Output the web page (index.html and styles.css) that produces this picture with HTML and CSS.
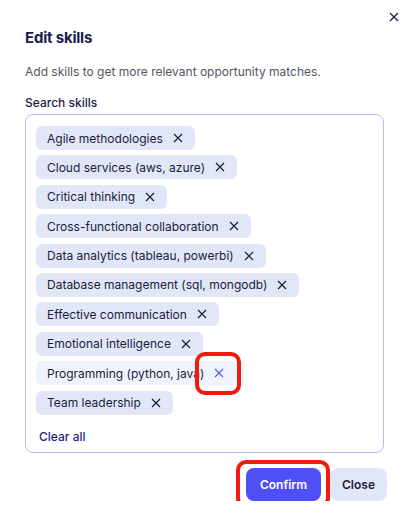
FILE: index.html
```html
<!DOCTYPE html>
<html lang="en">
<head>
<meta charset="utf-8">
<link rel="stylesheet" href="styles.css">
</head>
<body>
<div class="dialog">
  <div class="topbar">
    <button class="dismiss" aria-label="Close">
      <svg viewBox="0 0 10 10" width="10" height="10"><path d="M1 1L9 9M9 1L1 9" stroke="#1b1b4b" stroke-width="1.3" fill="none"/></svg>
    </button>
  </div>
  <h1 class="title">Edit skills</h1>
  <p class="desc">Add skills to get more relevant opportunity matches.</p>
  <div class="label">Search skills</div>
  <div class="box">
    <div class="chips">
      <span class="chip">Agile methodologies<svg class="x" viewBox="0 0 10 10"><path d="M1 1L9 9M9 1L1 9"/></svg></span>
      <span class="chip">Cloud services (aws, azure)<svg class="x" viewBox="0 0 10 10"><path d="M1 1L9 9M9 1L1 9"/></svg></span>
      <span class="chip">Critical thinking<svg class="x" viewBox="0 0 10 10"><path d="M1 1L9 9M9 1L1 9"/></svg></span>
      <span class="chip">Cross-functional collaboration<svg class="x" viewBox="0 0 10 10"><path d="M1 1L9 9M9 1L1 9"/></svg></span>
      <span class="chip">Data analytics (tableau, powerbi)<svg class="x" viewBox="0 0 10 10"><path d="M1 1L9 9M9 1L1 9"/></svg></span>
      <span class="chip">Database management (sql, mongodb)<svg class="x" viewBox="0 0 10 10"><path d="M1 1L9 9M9 1L1 9"/></svg></span>
      <span class="chip">Effective communication<svg class="x" viewBox="0 0 10 10"><path d="M1 1L9 9M9 1L1 9"/></svg></span>
      <span class="chip">Emotional intelligence<svg class="x" viewBox="0 0 10 10"><path d="M1 1L9 9M9 1L1 9"/></svg></span>
      <span class="chip hover">Programming (python, java)<span class="xwrap"><svg class="x" viewBox="0 0 10 10"><path d="M1 1L9 9M9 1L1 9"/></svg><span class="mark mark-x"></span></span></span>
      <span class="chip">Team leadership<svg class="x" viewBox="0 0 10 10"><path d="M1 1L9 9M9 1L1 9"/></svg></span>
    </div>
    <div class="clear">Clear all</div>
  </div>
  <div class="actions">
    <button class="btn primary">Confirm<span class="mark mark-btn"></span></button>
    <button class="btn secondary">Close</button>
  </div>
</div>
</body>
</html>
```
FILE: styles.css
```css
html, body {
  margin: 0;
  padding: 0;
  background: #ffffff;
}
body {
  font-family: Inter, "Noto Sans", sans-serif;
  color: #1c1c3c;
}
.dialog {
  padding: 0 21px 0 25px;
}
.topbar {
  display: flex;
  justify-content: flex-end;
  padding-top: 12px;
  margin-right: -15px;
  height: 12px;
}
.dismiss {
  border: 0;
  background: none;
  padding: 0;
  width: 10px;
  height: 10px;
  display: flex;
}
.title {
  margin: 4px 0 0;
  font-size: 15px;
  font-weight: 700;
  line-height: 20px;
  color: #1b1b4b;
  letter-spacing: -0.2px;
}
.desc {
  margin: 16px 0 0;
  font-size: 12px;
  line-height: 16px;
  color: #55555f;
}
.label {
  margin-top: 15px;
  font-size: 12px;
  line-height: 16px;
  font-weight: 500;
  color: #1b1b4b;
}
.box {
  margin-top: 3px;
  border: 1px solid #b9b9f7;
  border-radius: 8px;
  padding: 11px 10px 5px 10px;
}
.chips {
  display: flex;
  flex-direction: column;
  align-items: flex-start;
  gap: 5.4px;
}
.chip {
  display: inline-flex;
  align-items: center;
  gap: 10px;
  height: 24px;
  padding: 0 12px 0 11px;
  border-radius: 6px;
  background: #e2e7f8;
  font-size: 12px;
  color: #1c1c3c;
}
.chip.hover {
  background: #eff3fd;
}
.x {
  width: 10px;
  height: 10px;
  stroke: #1c1c3c;
  stroke-width: 1.2;
  fill: none;
}
.chip.hover .x {
  stroke: #5b5bf0;
}
.xwrap {
  position: relative;
  display: flex;
}
.clear {
  margin-top: 12px;
  font-size: 12px;
  line-height: 20px;
  font-weight: 500;
  color: #1e1e8c;
  padding-left: 3px;
}
.actions {
  display: flex;
  justify-content: flex-end;
  gap: 9px;
  margin-top: 15px;
  margin-right: -3px;
}
.btn {
  position: relative;
  border: 0;
  border-radius: 8px;
  height: 33px;
  font-family: Inter, "Noto Sans", sans-serif;
  font-size: 12px;
  font-weight: 600;
}
.primary {
  width: 75px;
  background: #4f4ff6;
  color: #ffffff;
}
.secondary {
  width: 57px;
  background: #e2e7f8;
  color: #1c1c3c;
}
.mark {
  position: absolute;
  border: 4px solid #f01a0e;
  border-radius: 10px;
  pointer-events: none;
}
.mark-btn {
  left: -10px;
  right: -9px;
  top: -8px;
  bottom: -7px;
}
.mark-x {
  left: -19px;
  right: -17px;
  top: -16px;
  bottom: -17px;
}
```
